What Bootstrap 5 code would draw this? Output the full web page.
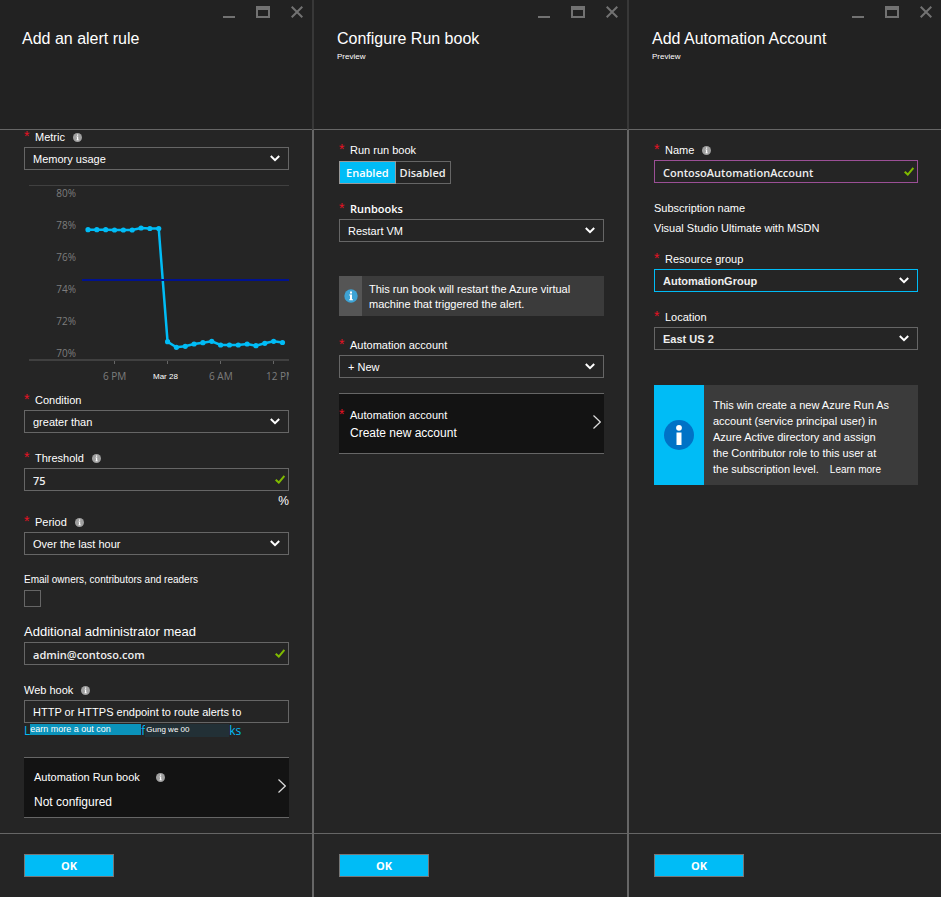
<!DOCTYPE html>
<html lang="en">
<head>
<meta charset="utf-8">
<meta name="viewport" content="width=device-width, initial-scale=1">
<title>Add an alert rule</title>
<link href="https://cdn.jsdelivr.net/npm/bootstrap@5.3.0/dist/css/bootstrap.min.css" rel="stylesheet">
<style>
:root { --line: #666; --cyan: #00bcf6; --ui: "Liberation Sans", Arial, sans-serif; --semi: "Open Sans", "Noto Sans", sans-serif; }
body { background: #252525; color: #fff; font: 11px/14px var(--ui); }
.blades { display: grid; grid-template-columns: 312fr 315fr 314fr; }
.blade-head { min-height: 130px; background: #222; border-bottom: 1px solid var(--line); padding: 6px 9px 0 22px; }
.blade-title { font-size: 16px; line-height: 20px; margin: 11px 0 3px; font-weight: 400; }
.preview-tag { font-size: 8px; line-height: 10px; }
.blade + .blade .blade-head { border-left: 2px solid #383838; padding-left: 23px; }
.blade + .blade .blade-main, .blade + .blade .blade-foot { border-left: 2px solid var(--line); padding-left: 25px; }
.blade-main { padding: 13px 23px 15px 24px; }
.blade-main.flush { padding-top: 0; }
.blade-foot { border-top: 1px solid var(--line); padding: 20px 23px 20px 24px; }
.win-btns { display: flex; justify-content: flex-end; gap: 21px; }
.win-btn { padding: 0; border: 0; background: none; line-height: 0; color: #727272; }
.win-btn svg, .hint svg, .tile svg { display: block; }
.fld { margin-bottom: 18px; }
.fld-label { display: flex; align-items: center; height: 14px; margin-bottom: 3px; font-size: 11px; line-height: 14px; }
.fld-label label, .fld-label .cap { white-space: nowrap; }
legend.fld-label { margin-bottom: 4px; }
.req::before { content: "*"; align-self: flex-start; color: #e81123; width: 11px; flex: none; font: 14px/12px var(--ui); }
.hint { padding: 0; border: 0; background: none; margin-left: 8px; }
.form-control.box, .form-select.box { height: 23px; min-height: 23px; padding: 1px 8px 0; border: 1px solid var(--line); border-radius: 0; background-color: #252525; color: #fff; font: 11px/20px var(--ui); }
.form-select.box { padding-right: 28px; background-image: url("data:image/svg+xml,%3Csvg xmlns='http://www.w3.org/2000/svg' viewBox='0 0 10 7'%3E%3Cpath fill='none' stroke='white' stroke-width='2' d='M.8 1 5 5.2 9.2 1'/%3E%3C/svg%3E"); background-size: 10px 7px; background-position: right 8px center; }
.form-control.valid { padding-right: 20px; background-image: url("data:image/svg+xml,%3Csvg xmlns='http://www.w3.org/2000/svg' viewBox='0 0 10 9'%3E%3Cpath fill='none' stroke='%237fba00' stroke-width='2' d='M.7 4.7 3.8 7.6 9.4.9'/%3E%3C/svg%3E"); background-repeat: no-repeat; background-size: 10px 9px; background-position: right 3px center; }
.form-control.box.semi { font-family: var(--semi); font-weight: 600; color: #eee; }
.form-select.box.strong { font-weight: 700; color: #eee; }
.form-control.box::placeholder { color: #fff; opacity: 1; }
.form-control.box.purple { border-color: #9b4f96; }
.form-select.box.cyan { border-color: var(--cyan); }
.semi-text { font-family: var(--semi); font-weight: 600; }
.chart { display: block; width: 100%; margin: 15px 0 8px; }
.unit { text-align: right; margin: 3px 0 7px; font-size: 12px; }
.form-check-input.sq { display: block; width: 17px; height: 17px; margin: 0; border: 1px solid var(--line); border-radius: 0; background-color: transparent; }
.tile { display: flex; align-items: center; justify-content: space-between; width: 100%; min-height: 61px; margin-top: 15px; background: #131313; color: #fff; border: solid var(--line); border-width: 1px 0; padding: 0 3px 0 0; text-align: left; }
.tile-roomy { display: flex; flex-direction: column; gap: 11px; padding: 4px 0 0 10px; }
.tile-value { font-size: 12px; }
.btn-ok { width: 90px; height: 23px; padding: 0; border: 1px solid #777; border-radius: 0; background: var(--cyan); color: #fff; font: 700 11px/20px var(--semi); }
.switch .btn { height: 23px; padding: 1px 4px 0; border: 1px solid var(--line); border-radius: 0; color: #eee; font: 600 11px/20px var(--semi); }
.switch .btn:first-of-type { padding: 1px 6px 0; }
.switch .btn-check:checked + .btn { background: var(--cyan); color: #fff; border-color: #999; }
.note { background: #3b3b3b; }
.note-ico { flex: none; display: flex; align-items: center; justify-content: center; }
.note-text { white-space: nowrap; }
.note-sm { margin: 34px 0 22px; }
.note-sm .note-ico { width: 23px; background: #555; }
.note-sm .note-text { padding: 6px 0 4px 7px; line-height: 15px; }
.note-lg { margin-top: 35px; }
.note-lg .note-ico { width: 50px; background: var(--cyan); }
.note-lg .note-text { padding: 12px 0 8px 9px; line-height: 16px; }
.learn { font-size: 10px; line-height: 1; color: #fff; text-decoration: none; margin-left: 8px; }
.mail-label { font-size: 10px; }
.admin-label { font-size: 13px; }
.sub { padding-left: 11px; }
.sub-name { margin: 6px 0 17px; }
.more { color: var(--cyan); text-decoration: none; font: 12px/13px var(--semi); height: 19px; padding-top: 1px; overflow: hidden; }
.more:hover { color: var(--cyan); }
.more-a { width: 111px; height: 11px; background: #0b93bb; color: #fff; font: 9px/11px var(--ui); white-space: nowrap; }
.more-b { width: 84px; height: 13px; padding-left: 1px; background: #223036; color: #fff; font: 8px/11px var(--ui); }
</style>
</head>
<body>
<svg class="d-none" aria-hidden="true">
  <symbol id="i-min" viewBox="0 0 12 12"><path fill="currentColor" d="M0 10h12v2H0z"/></symbol>
  <symbol id="i-max" viewBox="0 0 14 12"><path fill="currentColor" fill-rule="evenodd" d="M0 0h14v12H0zM2 4v6h10V4z"/></symbol>
  <symbol id="i-x" viewBox="0 0 12 12"><path stroke="currentColor" stroke-width="2" d="M.7.7l10.6 10.6M11.3.7.7 11.3"/></symbol>
  <symbol id="i-info" viewBox="0 0 9 9"><circle cx="4.500" cy="4.500" r="4.500" fill="#a0a0a0"/><path fill="#fff" d="M4 1.500h1.200v1.200H4zM3.500 3.500h1.700v3h.6v.7H3.400v-.7H4V4.200h-.5z"/></symbol>
  <symbol id="i-go" viewBox="0 0 8 14"><path fill="none" stroke="#ddd" stroke-width="1.200" d="M.5.5 7.300 7 .5 13.500"/></symbol>
</svg>
<div class="blades min-vh-100">

<form class="blade d-flex flex-column">
  <header class="blade-head">
    <div class="win-btns">
      <button type="button" class="win-btn" aria-label="Minimize"><svg width="12" height="12"><use href="#i-min"/></svg></button>
      <button type="button" class="win-btn" aria-label="Maximize"><svg width="14" height="12"><use href="#i-max"/></svg></button>
      <button type="button" class="win-btn" aria-label="Close"><svg width="12" height="12"><use href="#i-x"/></svg></button>
    </div>
    <h1 class="blade-title">Add an alert rule</h1>
  </header>
  <div class="blade-main flush flex-grow-1">
    <div class="fld-label req"><label for="metric">Metric</label><button type="button" class="hint" aria-label="About metric"><svg width="9" height="9"><use href="#i-info"/></svg></button></div>
    <select id="metric" class="form-select box"><option>Memory usage</option></select>
    <svg class="chart" viewBox="0 0 265 200" role="img" aria-label="Memory usage over time">
      <path stroke="#404040" d="M5 .5h260"/>
      <path stroke="#404040" stroke-width="2" d="M5 175h260"/>
      <path stroke="#666" d="M90.500 176v3M143.500 176v3M196.500 176v3M249.500 176v3"/>
      <g fill="#7d7d7d" font-family="Open Sans, sans-serif" font-size="10">
        <g text-anchor="end"><text x="52" y="12">80%</text><text x="52" y="44">78%</text><text x="52" y="76">76%</text><text x="52" y="108">74%</text><text x="52" y="140">72%</text><text x="52" y="172">70%</text></g>
        <text x="79" y="195">6 PM</text><text x="185" y="195">6 AM</text><text x="242" y="195">12 PM</text>
      </g>
      <text x="129" y="194" fill="#fff" font-family="Liberation Sans, sans-serif" font-size="8">Mar 28</text>
      <g id="series" fill="#00bcf6"></g>
      <path stroke="#00128f" stroke-width="2" d="M58 95h207"/>
    </svg>
    <div class="fld">
      <div class="fld-label req"><label for="cond">Condition</label></div>
      <select id="cond" class="form-select box"><option>greater than</option></select>
    </div>
    <div class="fld-label req"><label for="thr">Threshold</label><button type="button" class="hint" aria-label="About threshold"><svg width="9" height="9"><use href="#i-info"/></svg></button></div>
    <input id="thr" class="form-control box valid semi" value="75">
    <div class="unit">%</div>
    <div class="fld">
      <div class="fld-label req"><label for="period">Period</label><button type="button" class="hint" aria-label="About period"><svg width="9" height="9"><use href="#i-info"/></svg></button></div>
      <select id="period" class="form-select box"><option>Over the last hour</option></select>
    </div>
    <div class="fld">
      <div class="fld-label mail-label"><label for="mail">Email owners, contributors and readers</label></div>
      <input id="mail" type="checkbox" class="form-check-input sq">
    </div>
    <div class="fld">
      <div class="fld-label admin-label"><label for="admin">Additional administrator mead</label></div>
      <input id="admin" class="form-control box valid semi" value="admin@contoso.com">
    </div>
    <div class="fld-label"><label for="hook">Web hook</label><button type="button" class="hint" aria-label="About web hook"><svg width="9" height="9"><use href="#i-info"/></svg></button></div>
    <input id="hook" class="form-control box" placeholder="HTTP or HTTPS endpoint to route alerts to">
    <a href="#" class="more d-flex"><span>L</span><span class="more-a">earn more a out con</span><span>f</span><span class="more-b">Gung we 00</span><span>ks</span></a>
    <button type="button" class="tile">
      <span class="tile-roomy">
        <span class="d-flex align-items-center">Automation Run book<svg class="ms-3" width="9" height="9"><use href="#i-info"/></svg></span>
        <span class="tile-value">Not configured</span>
      </span>
      <svg class="mb-1" width="8" height="14"><use href="#i-go"/></svg>
    </button>
  </div>
  <footer class="blade-foot"><button type="button" class="btn-ok">OK</button></footer>
</form>

<form class="blade d-flex flex-column">
  <header class="blade-head">
    <div class="win-btns">
      <button type="button" class="win-btn" aria-label="Minimize"><svg width="12" height="12"><use href="#i-min"/></svg></button>
      <button type="button" class="win-btn" aria-label="Maximize"><svg width="14" height="12"><use href="#i-max"/></svg></button>
      <button type="button" class="win-btn" aria-label="Close"><svg width="12" height="12"><use href="#i-x"/></svg></button>
    </div>
    <h2 class="blade-title">Configure Run book</h2>
    <div class="preview-tag">Preview</div>
  </header>
  <div class="blade-main flex-grow-1">
    <fieldset class="fld">
      <legend class="fld-label req"><span class="cap">Run run book</span></legend>
      <div class="switch d-flex">
        <input type="radio" class="btn-check" name="run" id="on" checked><label class="btn" for="on">Enabled</label>
        <input type="radio" class="btn-check" name="run" id="off"><label class="btn border-start-0" for="off">Disabled</label>
      </div>
    </fieldset>
    <div class="fld">
      <div class="fld-label req"><label for="books" class="semi-text">Runbooks</label></div>
      <select id="books" class="form-select box"><option>Restart VM</option></select>
    </div>
    <div class="note d-flex note-sm">
      <div class="note-ico"><svg width="14" height="14" viewBox="0 0 14 14"><circle cx="7" cy="7" r="6.700" fill="#3ea3d4"/><path fill="#fff" d="M6 2.500h2v2H6zM5.200 5.500H8v4.700h1v1.100H5.200v-1.100H6V6.600h-.8z"/></svg></div>
      <div class="note-text">This run book will restart the Azure virtual<br>machine that triggered the alert.</div>
    </div>
    <div class="fld-label req"><label for="acct">Automation account</label></div>
    <select id="acct" class="form-select box"><option>+ New</option></select>
    <button type="button" class="tile">
      <span class="d-flex flex-column gap-1">
        <span class="d-flex req">Automation account</span>
        <span class="sub tile-value">Create new account</span>
      </span>
      <svg class="mb-1" width="8" height="14"><use href="#i-go"/></svg>
    </button>
  </div>
  <footer class="blade-foot"><button type="button" class="btn-ok">OK</button></footer>
</form>

<form class="blade d-flex flex-column">
  <header class="blade-head">
    <div class="win-btns">
      <button type="button" class="win-btn" aria-label="Minimize"><svg width="12" height="12"><use href="#i-min"/></svg></button>
      <button type="button" class="win-btn" aria-label="Maximize"><svg width="14" height="12"><use href="#i-max"/></svg></button>
      <button type="button" class="win-btn" aria-label="Close"><svg width="12" height="12"><use href="#i-x"/></svg></button>
    </div>
    <h2 class="blade-title">Add Automation Account</h2>
    <div class="preview-tag">Preview</div>
  </header>
  <div class="blade-main flex-grow-1">
    <div class="fld">
      <div class="fld-label req"><label for="name">Name</label><button type="button" class="hint" aria-label="About name"><svg width="9" height="9"><use href="#i-info"/></svg></button></div>
      <input id="name" class="form-control box valid semi purple" value="ContosoAutomationAccount">
    </div>
    <div class="text-nowrap">Subscription name</div>
    <div class="sub-name text-nowrap">Visual Studio Ultimate with MSDN</div>
    <div class="fld">
      <div class="fld-label req"><label for="group">Resource group</label></div>
      <select id="group" class="form-select box strong cyan"><option>AutomationGroup</option></select>
    </div>
    <div class="fld">
      <div class="fld-label req"><label for="loc">Location</label></div>
      <select id="loc" class="form-select box strong"><option>East US 2</option></select>
    </div>
    <div class="note d-flex note-lg">
      <div class="note-ico"><svg width="30" height="30" viewBox="0 0 30 30"><circle cx="15" cy="15" r="15" fill="#0072c6"/><circle cx="15" cy="7.800" r="2.900" fill="#fff"/><path fill="#fff" d="M12.500 12.500h5V25h-5z"/></svg></div>
      <div class="note-text">This win create a new Azure Run As<br>account (service principal user) in<br>Azure Active directory and assign<br>the Contributor role to this user at<br>the subscription level. <a href="#" class="learn">Learn more</a></div>
    </div>
  </div>
  <footer class="blade-foot"><button type="button" class="btn-ok">OK</button></footer>
</form>
</div>
<script src="https://cdn.jsdelivr.net/npm/bootstrap@5.3.0/dist/js/bootstrap.bundle.min.js"></script>
<script>
const ys = [44.7, 44.7, 44.7, 45, 45, 45, 43, 43.5, 43.5, 156.7, 162.3, 161.3, 159, 157.7, 156.3, 160, 160, 160, 159, 160.7, 158.3, 156.3, 157.5];
const pts = ys.map((y, i) => [64 + i * 8.84, y]);
document.getElementById('series').innerHTML =
  `<polyline fill="none" stroke="#00bcf6" stroke-width="2.500" points="${pts.join(' ')}"/>` +
  pts.map(p => `<circle cx="${p[0]}" cy="${p[1]}" r="2.600"/>`).join('');
</script>
</body>
</html>
